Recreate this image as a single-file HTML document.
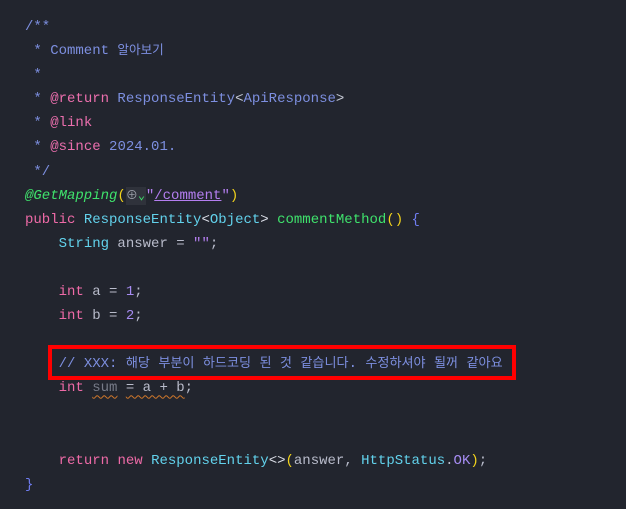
<!DOCTYPE html>
<html><head><meta charset="utf-8"><style>
html,body{margin:0;padding:0;background:#22252e;width:626px;height:509px;overflow:hidden}
.c{position:absolute;left:25px;top:15px;font-family:"Liberation Mono","Noto Sans CJK KR",monospace;font-size:14px;line-height:24.1px;white-space:pre;color:#b9bccb}
.k{font-family:"Noto Sans CJK KR",sans-serif;font-size:12.6px;line-height:0}
.k2{font-family:"Noto Sans CJK KR",sans-serif;font-size:13.1px;line-height:0}
.cm{color:#7d8fe0}.tag{color:#ec6fae}.kw{color:#ee6aa7}.ty{color:#62d2ec}.fn{color:#3fe26c}
.an{color:#3fe26c;font-style:italic}.st{color:#b47ef0}.y{color:#f2d31c}.n{color:#a68cf2}.v{color:#b9bccb}
.g{color:#777b88}.sq{text-decoration:underline wavy #d1782a;text-decoration-thickness:1px;text-underline-offset:3px}
.box{position:absolute;left:48px;top:345px;width:460px;height:27px;border:4px solid #ff0000}
.glob{display:inline-block;background:#2f323b;color:#9a9ea8;font-size:12px;width:20px;line-height:18px}
</style></head><body>
<div class="c"><span class="cm">/**
 * Comment <span class="k">알아보기</span>
 *
 * <span class="tag">@return</span> ResponseEntity<span style="color:#c8ccd8">&lt;</span>ApiResponse<span style="color:#c8ccd8">&gt;</span>
 * <span class="tag">@link</span>
 * <span class="tag">@since</span> 2024.01.
 */</span>
<span class="an">@GetMapping</span><span class="y">(</span><span class="glob">⊕<span style="color:#3fe26c">⌄</span></span><span class="st">"<u>/comment</u>"</span><span class="y">)</span>
<span class="kw">public</span> <span class="ty">ResponseEntity</span><span style="color:#dcdfe8">&lt;</span><span class="ty">Object</span><span style="color:#dcdfe8">&gt;</span> <span class="fn">commentMethod</span><span class="y">()</span> <span style="color:#6f7cf0">{</span>
    <span class="ty">String</span> answer = <span class="st">""</span>;

    <span class="kw">int</span> a = <span class="n">1</span>;
    <span class="kw">int</span> b = <span class="n">2</span>;

    <span class="cm">// XXX: <span class="k2">해당</span> <span class="k2">부분이</span> <span class="k2">하드코딩</span> <span class="k2">된</span> <span class="k2">것</span> <span class="k2">같습니다</span>. <span class="k2">수정하셔야</span> <span class="k2">될꺼</span> <span class="k2">같아요</span></span>
    <span class="kw">int</span> <span class="g sq">sum</span> <span class="sq">= a + b</span>;


    <span class="kw">return</span> <span class="kw">new</span> <span class="ty">ResponseEntity</span><span style="color:#dcdfe8">&lt;&gt;</span><span class="y">(</span>answer, <span class="ty">HttpStatus</span>.<span class="n">OK</span><span class="y">)</span>;
<span style="color:#6f7cf0">}</span></div>
<div class="box"></div>
</body></html>
